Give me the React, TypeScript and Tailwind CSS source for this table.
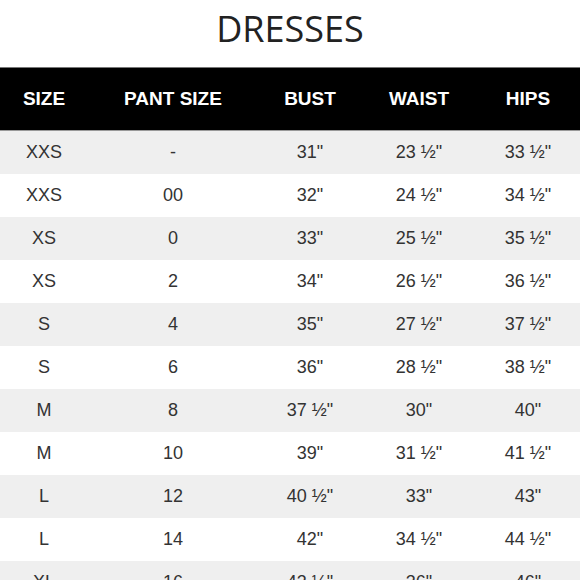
const rows: [string, string, string, string, string][] = [
  ["XXS", "-", '31"', '23 ½"', '33 ½"'],
  ["XXS", "00", '32"', '24 ½"', '34 ½"'],
  ["XS", "0", '33"', '25 ½"', '35 ½"'],
  ["XS", "2", '34"', '26 ½"', '36 ½"'],
  ["S", "4", '35"', '27 ½"', '37 ½"'],
  ["S", "6", '36"', '28 ½"', '38 ½"'],
  ["M", "8", '37 ½"', '30"', '40"'],
  ["M", "10", '39"', '31 ½"', '41 ½"'],
  ["L", "12", '40 ½"', '33"', '43"'],
  ["L", "14", '42"', '34 ½"', '44 ½"'],
  ["XL", "16", '43 ½"', '36"', '46"'],
];

const heads = ["SIZE", "PANT SIZE", "BUST", "WAIST", "HIPS"];

const cols = "grid grid-cols-[88px_170px_104px_114px_104px]";

export default function App() {
  return (
    <div className="w-[580px] h-[580px] overflow-hidden bg-white font-['Liberation_Sans',Arial,sans-serif]">
      <div className="h-[67px] pt-[11px] text-center">
        <h1 className="text-[36px] leading-[36px] text-[#222] font-['Open_Sans',sans-serif] font-normal">
          DRESSES
        </h1>
      </div>
      <div className={`${cols} h-[64px] bg-black border-t border-[#777] border-b border-b-[#999]`}>
        {heads.map((h) => (
          <div key={h} className="flex items-center justify-center text-[19px] font-bold text-white">
            {h}
          </div>
        ))}
      </div>
      {rows.map((r, i) => (
        <div
          key={i}
          className={`${cols} h-[43px] ${i % 2 === 0 ? "bg-[#efefef]" : "bg-white"}`}
        >
          {r.map((c, j) => (
            <div key={j} className="flex items-center justify-center text-[18px] text-[#333]">
              {c}
            </div>
          ))}
        </div>
      ))}
    </div>
  );
}
